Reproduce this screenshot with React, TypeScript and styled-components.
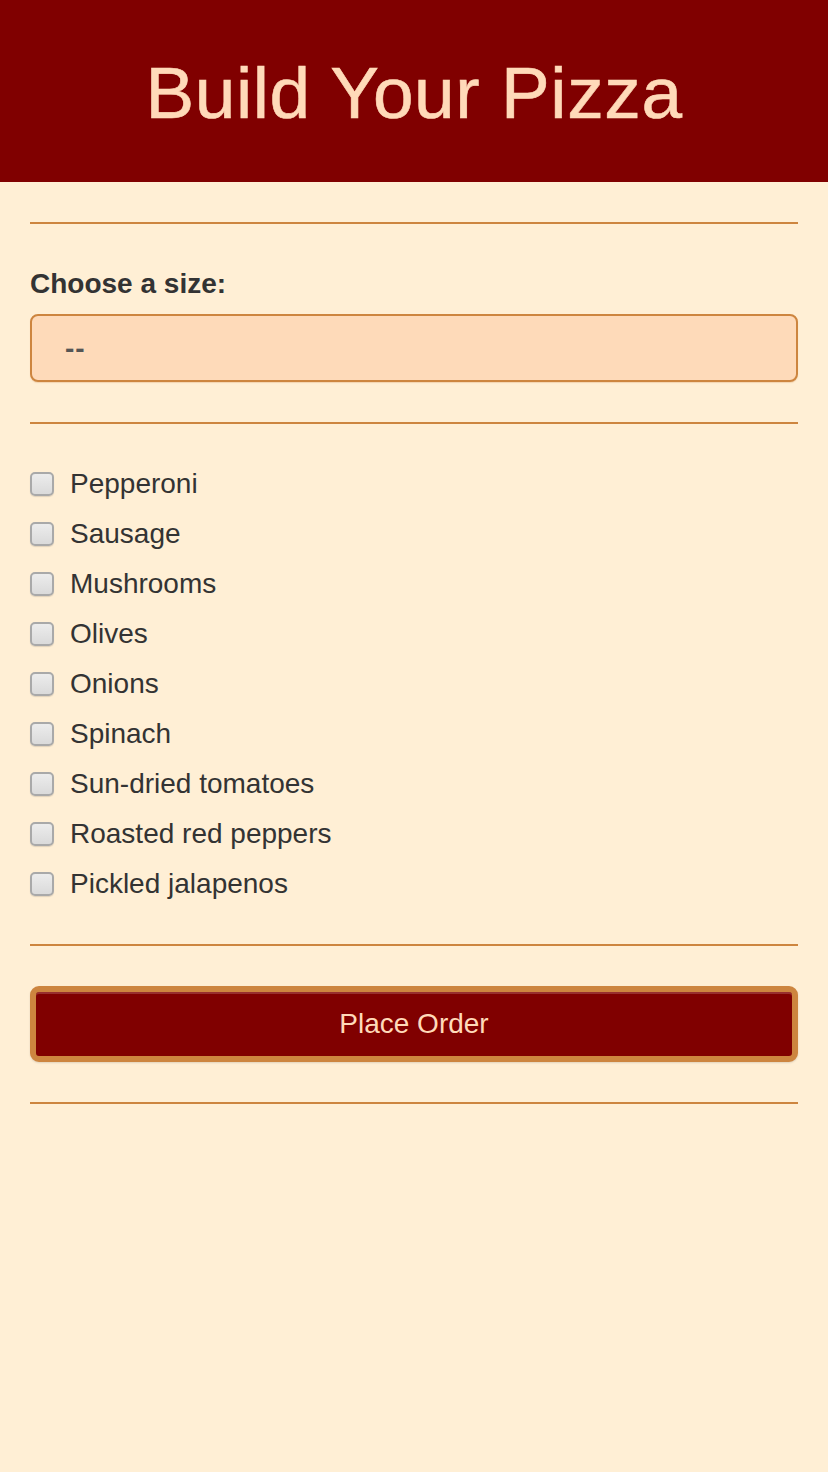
import React, { useState } from 'react';
import styled, { createGlobalStyle } from 'styled-components';

const GlobalStyle = createGlobalStyle`
  html, body {
    margin: 0;
    padding: 0;
    background-color: #ffefd5;
    font-family: "Liberation Sans", Arial, Helvetica, sans-serif;
    color: #333;
  }
  * {
    box-sizing: border-box;
  }
`;

const TOPPINGS = [
  'Pepperoni',
  'Sausage',
  'Mushrooms',
  'Olives',
  'Onions',
  'Spinach',
  'Sun-dried tomatoes',
  'Roasted red peppers',
  'Pickled jalapenos',
];

const Page = styled.div`
  min-height: 1472px;
  background-color: #ffefd5;
`;

const Header = styled.header`
  height: 182px;
  background-color: #800000;
  display: flex;
  align-items: center;
  justify-content: center;
`;

const Title = styled.h1`
  margin: 0;
  padding-top: 2px;
  font-size: 73px;
  font-weight: 400;
  line-height: 1;
  color: #ffdab9;
  letter-spacing: 0.6px;
  -webkit-text-stroke: 0.6px #ffdab9;
`;

const Form = styled.form`
  padding: 0 30px;
  display: flex;
  flex-direction: column;
`;

const Rule = styled.hr`
  height: 2px;
  margin: 40px 0;
  border: none;
  background-color: #cd853f;
`;

const Field = styled.div`
  display: flex;
  flex-direction: column;
  gap: 14px;
  padding-top: 4px;
`;

const Label = styled.label`
  font-size: 28px;
  font-weight: 700;
  line-height: 32px;
  color: #333;
`;

const Select = styled.select`
  appearance: none;
  -webkit-appearance: none;
  width: 100%;
  height: 68px;
  padding: 0 33px;
  border: 2px solid #cd853f;
  border-radius: 8px;
  background-color: #fedab9;
  box-shadow: 0 1px 1px rgba(205, 133, 63, 0.25);
  font-family: inherit;
  font-size: 28px;
  font-weight: 700;
  letter-spacing: 1px;
  color: #555;
  outline: none;
`;

const ToppingList = styled.ul`
  list-style: none;
  margin: 0;
  padding: 0;
  display: flex;
  flex-direction: column;
  gap: 10px;
`;

const ToppingRow = styled.li`
  height: 40px;
  display: flex;
  align-items: center;
  gap: 16px;
  font-size: 28px;
  color: #333;
`;

const Check = styled.input`
  appearance: none;
  -webkit-appearance: none;
  margin: 0;
  width: 24px;
  height: 24px;
  border: 2px solid #a9a9a9;
  border-radius: 5px;
  background: linear-gradient(#ececec, #dadada);
  box-shadow: 0 1px 1px rgba(0, 0, 0, 0.12);
  flex-shrink: 0;

  &:checked {
    background: linear-gradient(#cd853f, #b86f2c);
  }
`;

const ToppingName = styled.label`
  line-height: 32px;
`;

const OrderButton = styled.button`
  width: 100%;
  height: 76px;
  border: 6px solid #cd853f;
  border-radius: 9px;
  background-color: #800000;
  box-shadow: inset 0 2px 0 rgba(255, 255, 255, 0.18), 0 1px 2px rgba(0, 0, 0, 0.12);
  color: #ffdab9;
  font-family: inherit;
  font-size: 28px;
  cursor: pointer;
`;

export default function App() {
  const [size, setSize] = useState('');
  const [picked, setPicked] = useState<string[]>([]);

  const toggle = (name: string) =>
    setPicked((p) => (p.includes(name) ? p.filter((n) => n !== name) : [...p, name]));

  return (
    <Page>
      <GlobalStyle />
      <Header>
        <Title>Build Your Pizza</Title>
      </Header>
      <Form onSubmit={(e) => e.preventDefault()}>
        <Rule />
        <Field>
          <Label htmlFor="size">Choose a size:</Label>
          <Select id="size" value={size} onChange={(e) => setSize(e.target.value)}>
            <option value="">--</option>
            <option value="small">Small</option>
            <option value="medium">Medium</option>
            <option value="large">Large</option>
          </Select>
        </Field>
        <Rule />
        <ToppingList>
          {TOPPINGS.map((t) => (
            <ToppingRow key={t}>
              <Check
                type="checkbox"
                id={t}
                checked={picked.includes(t)}
                onChange={() => toggle(t)}
              />
              <ToppingName htmlFor={t}>{t}</ToppingName>
            </ToppingRow>
          ))}
        </ToppingList>
        <Rule />
        <OrderButton type="submit">Place Order</OrderButton>
        <Rule />
      </Form>
    </Page>
  );
}
